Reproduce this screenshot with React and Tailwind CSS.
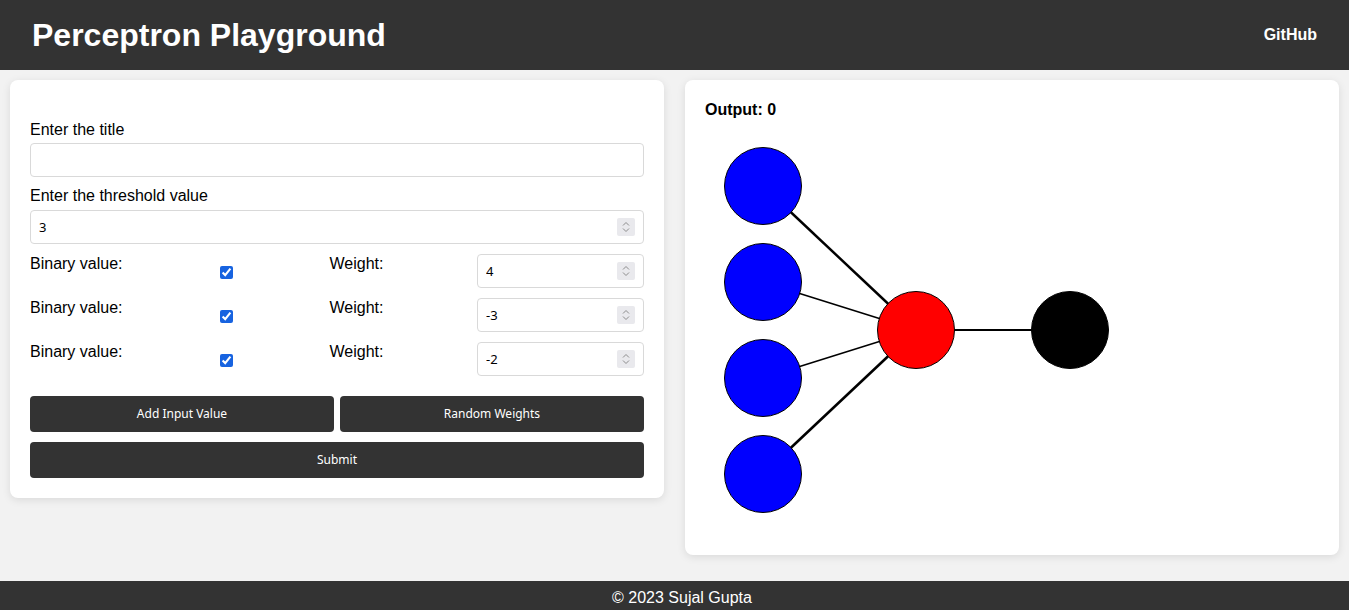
import React, { useState } from "react";

const inputs = [
  { cy: 67, w: 2.5 },
  { cy: 163, w: 1.5 },
  { cy: 259, w: 1.5 },
  { cy: 355, w: 2.5 },
];

function Network() {
  return (
    <svg width="600" height="416" className="block">
      {inputs.map((n, i) => (
        <line key={"l" + i} x1="58" y1={n.cy} x2="211" y2="211" stroke="black" strokeWidth={n.w} />
      ))}
      <line x1="211" y1="211" x2="365" y2="211" stroke="black" strokeWidth="2" />
      {inputs.map((n, i) => (
        <circle key={"c" + i} cx="58" cy={n.cy} r="38.5" fill="blue" stroke="black" strokeWidth="1" />
      ))}
      <circle cx="211" cy="211" r="38.5" fill="red" stroke="black" strokeWidth="1" />
      <circle cx="365" cy="211" r="38.5" fill="black" stroke="black" strokeWidth="1" />
    </svg>
  );
}

const inputCls =
  "w-full h-[34px] px-2 border border-[#d9d9d9] rounded-[4px] bg-white text-[13px] text-black font-['Noto_Sans',sans-serif] outline-none [appearance:textfield] [&::-webkit-inner-spin-button]:appearance-none [&::-webkit-outer-spin-button]:appearance-none";

// number field with the spin arrows drawn on top
function NumberField({ value, onChange, className = "" }) {
  return (
    <div className={"relative " + className}>
      <input type="number" className={inputCls} value={value} onChange={onChange} />
      <span className="pointer-events-none absolute right-[9px] top-[8px] w-[18px] h-[18px] bg-[#e9e9ed] rounded-[2px]">
        <svg width="18" height="18" fill="none" stroke="#8c8c8c" strokeWidth="1">
          <path d="M6 7.5 L9 4.5 L12 7.5" />
          <path d="M6 10.5 L9 13.5 L12 10.5" />
        </svg>
      </span>
    </div>
  );
}

export default function App() {
  const [title, setTitle] = useState("");
  const [threshold, setThreshold] = useState(3);
  const [rows, setRows] = useState([
    { on: true, weight: 4 },
    { on: true, weight: -3 },
    { on: true, weight: -2 },
  ]);

  const btnCls =
    "h-9 bg-[#333333] text-white text-[12px] rounded-[4px] font-['Noto_Sans',sans-serif]";

  return (
    <div className="min-h-screen bg-[#f2f2f2] font-['Liberation_Sans',Arial,sans-serif] text-black">
      {/* header */}
      <header className="h-[70px] bg-[#333333] flex items-center justify-between px-8">
        <h1 className="text-[32px] font-bold text-white">Perceptron Playground</h1>
        <a href="#" className="text-white font-bold text-base">GitHub</a>
      </header>

      <main className="grid grid-cols-2 gap-[21px] px-[10px] pt-[10px] items-start">
        {/* form card */}
        <div className="bg-white rounded-lg shadow-[0_2px_8px_rgba(0,0,0,0.1)] px-5 pt-[41px] pb-5">
          <label className="block leading-[18px]">Enter the title</label>
          <input
            className={inputCls + " mt-[4px]"}
            value={title}
            onChange={(e) => setTitle(e.target.value)}
          />
          <label className="block leading-[18px] mt-[10px]">Enter the threshold value</label>
          <NumberField
            className="mt-[5px]"
            value={threshold}
            onChange={(e) => setThreshold(e.target.value)}
          />

          <div className="mt-[10px] flex flex-col gap-[10px]">
            {rows.map((r, i) => (
              <div key={i} className="flex justify-between items-start h-[34px]">
                <span className="leading-[18px] pt-px">Binary value:</span>
                <input
                  type="checkbox"
                  checked={r.on}
                  onChange={() =>
                    setRows(rows.map((x, j) => (j === i ? { ...x, on: !x.on } : x)))
                  }
                  className="w-[13px] h-[13px] mt-[12px] ml-1 mr-[3px] accent-[#1763e0]"
                />
                <span className="leading-[18px] pt-px">Weight:</span>
                <NumberField
                  className="w-[167px]"
                  value={r.weight}
                  onChange={(e) =>
                    setRows(rows.map((x, j) => (j === i ? { ...x, weight: e.target.value } : x)))
                  }
                />
              </div>
            ))}
          </div>

          <div className="mt-5 grid grid-cols-2 gap-[6px]">
            <button className={btnCls}>Add Input Value</button>
            <button className={btnCls}>Random Weights</button>
          </div>
          <button className={btnCls + " w-full mt-[10px]"}>Submit</button>
        </div>

        {/* network card */}
        <div className="bg-white rounded-lg shadow-[0_2px_8px_rgba(0,0,0,0.1)] p-5">
          <h3 className="font-bold text-base leading-[18px] mt-px">Output: 0</h3>
          <Network />
        </div>
      </main>

      <footer className="mt-[26px] bg-[#333333] text-white text-center pt-[5px] pb-2 pl-[15px] leading-6">
        © 2023 Sujal Gupta
      </footer>
    </div>
  );
}
